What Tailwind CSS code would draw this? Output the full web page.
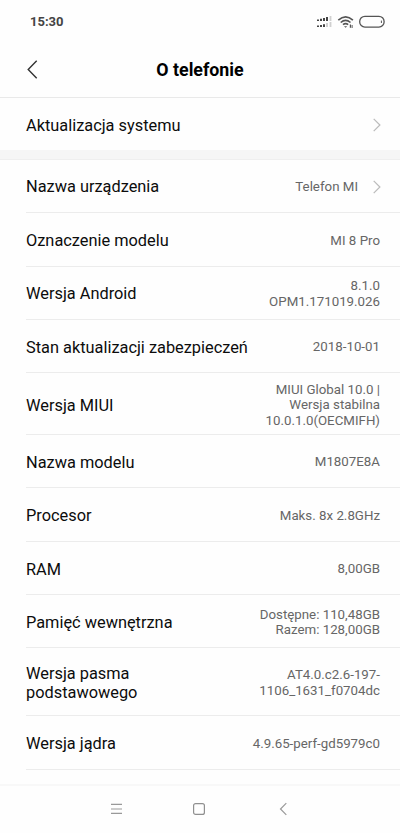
<!DOCTYPE html>
<html lang="pl">
<head>
<meta charset="utf-8">
<meta name="viewport" content="width=device-width, initial-scale=1">
<title>O telefonie</title>
<script src="https://cdn.jsdelivr.net/npm/@tailwindcss/browser@4"></script>
</head>
<body class="bg-[#fefefe] font-['Roboto',sans-serif] text-[#0c0c0c]">
<div class="flex h-[833px] w-[400px] flex-col overflow-hidden">
  <header class="flex h-[98px] shrink-0 flex-col border-b border-[#e9e9e9]">
    <div class="flex h-[42px] items-center justify-between pt-px pr-[15px] pl-[30px]">
      <span class="text-[13px] font-bold text-[#444]">15:30</span>
      <div class="flex items-center">
        <svg class="h-[12px] w-[16px]" viewBox="0 0 16 12" fill="#444">
          <path d="M0 3.4h2V5H0zM3 2.8h2V5H3zM6 2h2v3H6zM9 1h2v4H9zM0 9.6h2V11H0zM3 9h2v2H3zM6 8.2h2V11H6z"/>
          <path fill="#d0d0d0" d="M12.6 0h1.8v5h-1.8zM9 7h2v4H9zM12.6 6h1.8v5h-1.8z"/>
        </svg>
        <svg class="ml-[4px] h-[14px] w-[18px]" viewBox="0 0 18 14" fill="none" stroke="#555" stroke-width="1.6">
          <path d="M1.3 5.2Q8.6-1.6 15.9 5.2M3.7 7.5q4.9-4.4 9.8 0M6 9.7q2.6-2.2 5.2 0"/>
          <path fill="#555" stroke="none" d="M7 11.2h3.2l-1.6 1.6zM12.8 9.6h1.2v3.2h-1.2zM14.6 10h1v3h-1z"/>
        </svg>
        <svg class="ml-[4px] h-[14px] w-[26px]" viewBox="0 0 26 14" fill="none" stroke="#555" stroke-width="1.3">
          <rect x=".7" y="1.3" width="24.4" height="10.8" rx="5.2"/><path d="M22.4 5.6v2.4" stroke-width="1"/>
        </svg>
      </div>
    </div>
    <div class="grid flex-1 grid-cols-[60px_1fr_60px] items-center">
      <svg class="ml-[27px] h-[20px] w-[12px]" viewBox="0 0 12 20" fill="none" stroke="#333" stroke-width="1.4"><path d="M9.7 .7 1.2 9.4l8.5 8.8"/></svg>
      <h1 class="pt-[2px] text-center text-[17.8px] font-bold text-black">O telefonie</h1>
    </div>
  </header>
  <main class="flex-1 overflow-hidden text-[16.35px] leading-[19px]">
    <div class="flex h-[52px] items-center justify-between pt-[2px] pr-[19px] pl-[26px]">
      <span>Aktualizacja systemu</span>
      <svg class="h-[14px] w-[8px]" viewBox="0 0 8 14" fill="none" stroke="#bbb" stroke-width="1.2"><path d="m.7.8 6.2 6.2-6.2 6.2"/></svg>
    </div>
    <div class="h-[10px] border-b border-[#efefef] bg-[#f6f6f6]"></div>
    <dl class="pl-[26px]">
      <div class="flex h-[53px] items-center justify-between border-b border-[#ececec] pt-[1px] pr-[19px]">
        <dt>Nazwa urządzenia</dt>
        <dd class="flex items-center text-[13.3px] leading-[15.5px] text-[#666]">Telefon MI
          <svg class="ml-[15px] h-[14px] w-[8px]" viewBox="0 0 8 14" fill="none" stroke="#bbb" stroke-width="1.2"><path d="m.7.8 6.2 6.2-6.2 6.2"/></svg>
        </dd>
      </div>
      <div class="flex h-[54px] items-center justify-between border-b border-[#ececec] pt-[2px] pr-[20px]">
        <dt>Oznaczenie modelu</dt>
        <dd class="text-right text-[13.3px] leading-[15.5px] text-[#666]">MI 8 Pro</dd>
      </div>
      <div class="flex h-[53px] items-center justify-between border-b border-[#ececec] pt-[1px] pr-[20px]">
        <dt>Wersja Android</dt>
        <dd class="text-right text-[13.3px] leading-[15.5px] text-[#666]">8.1.0<br>OPM1.171019.026</dd>
      </div>
      <div class="flex h-[53px] items-center justify-between border-b border-[#ececec] pt-[2px] pr-[20px]">
        <dt>Stan aktualizacji zabezpieczeń</dt>
        <dd class="text-right text-[13.3px] leading-[15.5px] text-[#666]">2018-10-01</dd>
      </div>
      <div class="flex h-[62px] items-center justify-between border-b border-[#ececec] pt-[3px] pr-[20px]">
        <dt>Wersja MIUI</dt>
        <dd class="text-right text-[13.3px] leading-[15.5px] text-[#666]">MIUI Global 10.0 |<br>Wersja stabilna<br>10.0.1.0(OECMIFH)</dd>
      </div>
      <div class="flex h-[53px] items-center justify-between border-b border-[#ececec] pt-[2px] pr-[20px]">
        <dt>Nazwa modelu</dt>
        <dd class="text-right text-[13.3px] leading-[15.5px] text-[#666]">M1807E8A</dd>
      </div>
      <div class="flex h-[54px] items-center justify-between border-b border-[#ececec] pt-[2px] pr-[20px]">
        <dt>Procesor</dt>
        <dd class="text-right text-[13.3px] leading-[15.5px] text-[#666]">Maks. 8x 2.8GHz</dd>
      </div>
      <div class="flex h-[53px] items-center justify-between border-b border-[#ececec] pt-[2px] pr-[20px]">
        <dt>RAM</dt>
        <dd class="text-right text-[13.3px] leading-[15.5px] text-[#666]">8,00GB</dd>
      </div>
      <div class="flex h-[53px] items-center justify-between border-b border-[#ececec] pt-[2px] pr-[20px]">
        <dt>Pamięć wewnętrzna</dt>
        <dd class="text-right text-[13.3px] leading-[15.5px] text-[#666]">Dostępne: 110,48GB<br>Razem: 128,00GB</dd>
      </div>
      <div class="flex h-[68px] items-center justify-between border-b border-[#ececec] pt-[2px] pr-[20px]">
        <dt>Wersja pasma<br>podstawowego</dt>
        <dd class="text-right text-[13.3px] leading-[15.5px] text-[#666]">AT4.0.c2.6-197-<br>1106_1631_f0704dc</dd>
      </div>
      <div class="flex h-[54px] items-center justify-between border-b border-[#ececec] pt-[2px] pr-[20px]">
        <dt>Wersja jądra</dt>
        <dd class="text-right text-[13.3px] leading-[15.5px] text-[#666]">4.9.65-perf-gd5979c0</dd>
      </div>
    </dl>
  </main>
  <nav class="grid h-[49px] shrink-0 grid-cols-[83px_83px_9px] items-center border-t-2 border-[#f8f8f8] pb-px pl-[110px]">
    <svg class="h-[14px] w-[13px]" viewBox="0 0 13 14" fill="none" stroke="#999" stroke-width="1.2"><path d="M1 2.3h11M1 7h11M1 11.3h11"/></svg>
    <svg class="-ml-px h-[14px] w-[14px]" viewBox="0 0 14 14" fill="none" stroke="#909090" stroke-width="1.2"><rect x="1.6" y="1.6" width="10.8" height="10.8" rx="2"/></svg>
    <svg class="ml-[3px] h-[14px] w-[9px]" viewBox="0 0 9 14" fill="none" stroke="#999" stroke-width="1.2"><path d="M7.3 1.2 1.5 7l5.8 5.8"/></svg>
  </nav>
</div>
</body>
</html>
